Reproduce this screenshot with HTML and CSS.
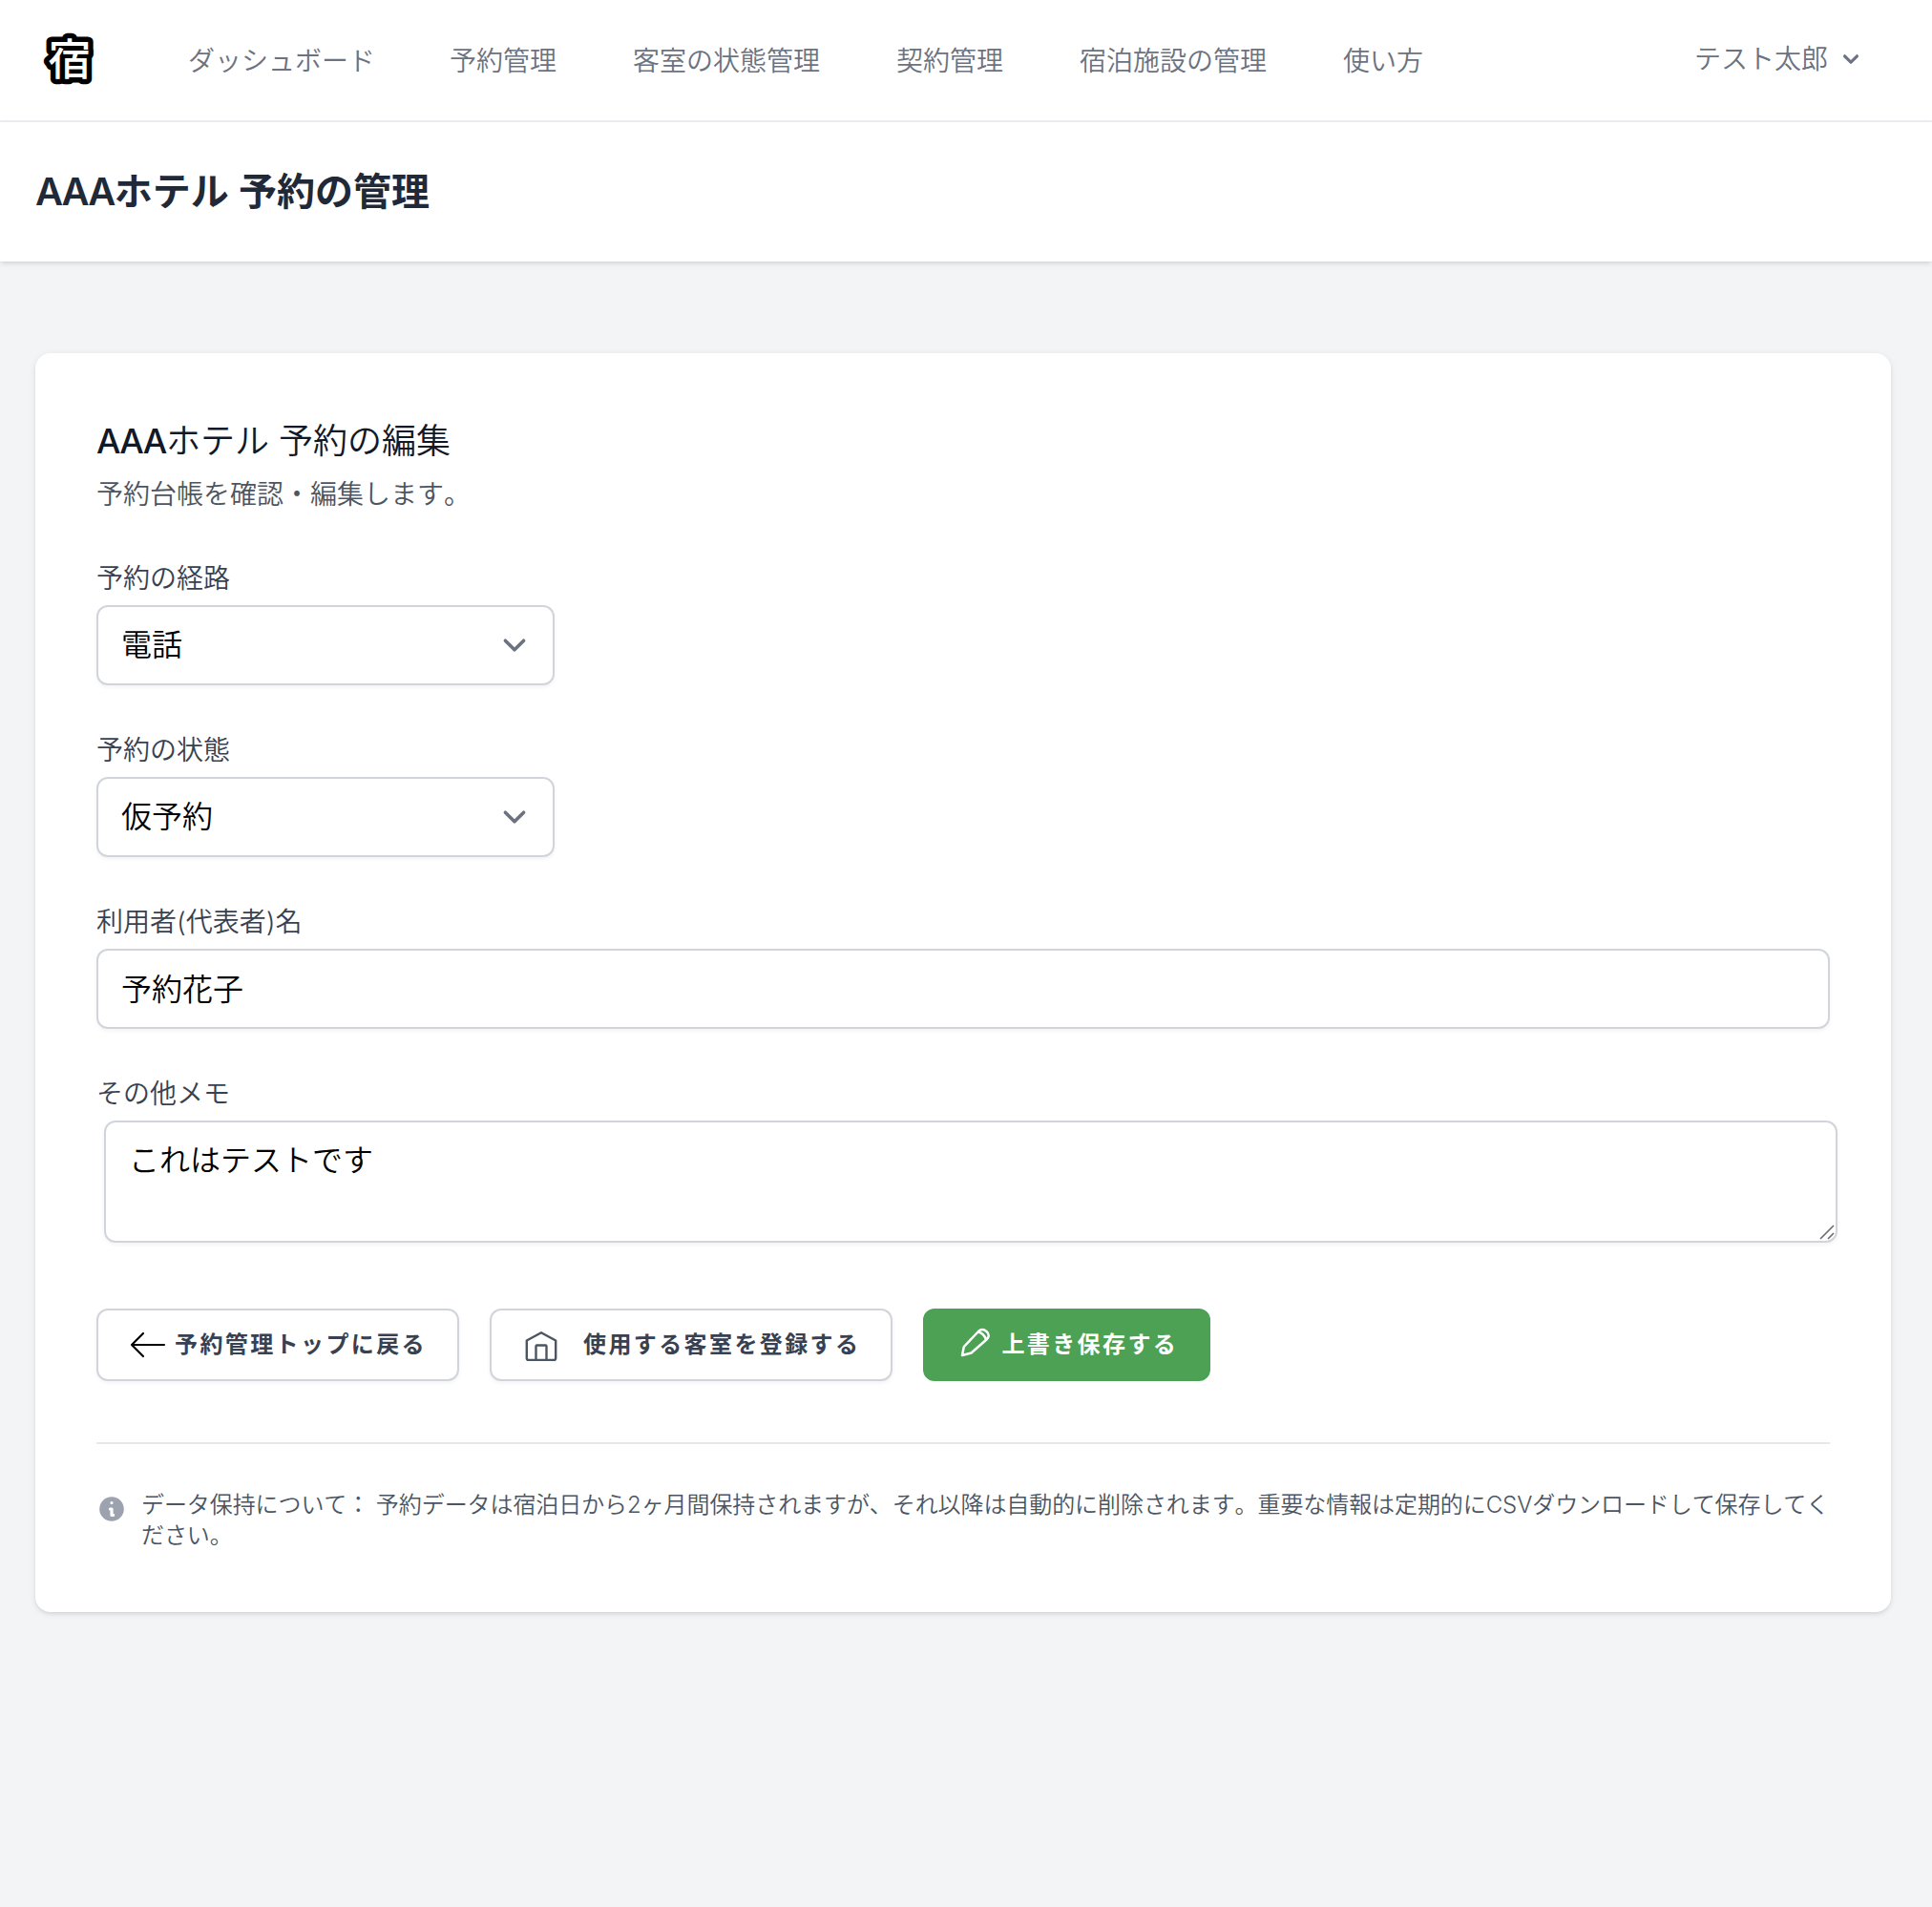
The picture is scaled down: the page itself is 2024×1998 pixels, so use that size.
FILE: index.html
```html
<!DOCTYPE html>
<html lang="ja">
<head>
<meta charset="utf-8">
<title>AAAホテル 予約の管理</title>
<link rel="stylesheet" href="styles.css">
</head>
<body>
<nav class="nav">
  <a class="logo" href="#" aria-label="宿">
    <svg width="80" height="80" viewBox="0 0 80 80"><text class="logo-text" x="40" y="56" text-anchor="middle">宿</text></svg>
  </a>
  <div class="nav-links">
    <a href="#">ダッシュボード</a>
    <a href="#">予約管理</a>
    <a href="#">客室の状態管理</a>
    <a href="#">契約管理</a>
    <a href="#">宿泊施設の管理</a>
    <a href="#">使い方</a>
  </div>
  <button class="user" type="button">
    <span>テスト太郎</span>
    <svg width="32" height="32" viewBox="0 0 20 20" fill="currentColor"><path fill-rule="evenodd" clip-rule="evenodd" d="M5.293 7.293a1 1 0 011.414 0L10 10.586l3.293-3.293a1 1 0 111.414 1.414l-4 4a1 1 0 01-1.414 0l-4-4a1 1 0 010-1.414z"/></svg>
  </button>
</nav>
<header class="page-header">
  <h1><span class="latin">AAA</span>ホテル 予約の管理</h1>
</header>
<main class="content">
  <section class="card">
    <h2><span class="latin">AAA</span>ホテル 予約の編集</h2>
    <p class="lead">予約台帳を確認・編集します。</p>
    <form class="form">
      <div class="field">
        <label for="route">予約の経路</label>
        <select id="route" class="control select"><option>電話</option></select>
      </div>
      <div class="field">
        <label for="status">予約の状態</label>
        <select id="status" class="control select"><option>仮予約</option></select>
      </div>
      <div class="field">
        <label for="guest">利用者(代表者)名</label>
        <input id="guest" class="control" type="text" value="予約花子">
      </div>
      <div class="field">
        <label for="memo">その他メモ</label>
        <div class="memo">
          <textarea id="memo" class="control">これはテストです</textarea>
          <svg class="grip" width="16" height="16" viewBox="0 0 16 16" fill="none" stroke="#6b6b6b" stroke-width="1.6"><path d="M1 15L15 1M9 15l6-6"/></svg>
        </div>
      </div>
      <div class="actions">
        <button class="btn" type="button">
          <svg width="40" height="28" viewBox="0 0 40 28" fill="none" stroke="#000" stroke-width="2.2" stroke-linecap="round" stroke-linejoin="round"><path d="M37 14H3M15 2L3 14l12 12"/></svg>
          <span>予約管理トップに戻る</span>
        </button>
        <button class="btn btn-room" type="button">
          <svg width="36" height="34" viewBox="0 0 36 34" fill="none" stroke="#4b5563" stroke-width="2.4" stroke-linejoin="round"><path d="M2.800 12.500L18 4.200l15.200 8.300V31a2 2 0 0 1-2 2H4.800a2 2 0 0 1-2-2zM12.500 33V18.500a1 1 0 0 1 1-1h9a1 1 0 0 1 1 1V33"/></svg>
          <span>使用する客室を登録する</span>
        </button>
        <button class="btn btn-save" type="button">
          <svg width="34" height="32" viewBox="0 0 34 32" fill="none" stroke="#fff" stroke-width="2.500" stroke-linejoin="round"><path d="M3 29l1.800-9L20 4q4-4 8.500 0t0 8.500L12.500 26.500zM19.500 4.500q6 1 8.500 8"/></svg>
          <span>上書き保存する</span>
        </button>
      </div>
    </form>
    <div class="notice">
      <svg width="32" height="32" viewBox="0 0 20 20" fill="#9ca3af"><path fill-rule="evenodd" clip-rule="evenodd" d="M18 10a8 8 0 11-16 0 8 8 0 0116 0zm-7-4a1 1 0 11-2 0 1 1 0 012 0zM9 9a1 1 0 000 2v3a1 1 0 001 1h1a1 1 0 100-2v-3a1 1 0 00-1-1H9z"/></svg>
      <p>データ保持について： 予約データは宿泊日から2ヶ月間保持されますが、それ以降は自動的に削除されます。重要な情報は定期的にCSVダウンロードして保存してください。</p>
    </div>
  </section>
</main>
</body>
</html>
```
FILE: styles.css
```css
*, *::before, *::after { box-sizing: border-box; }
body {
  margin: 0;
  min-height: 1998px;
  background: #f3f4f6;
  color: #111827;
  font-family: Inter, "Noto Sans CJK JP", sans-serif;
  font-weight: 350;
  font-kerning: none;
}
h1, h2, p { margin: 0; font-weight: inherit; }
svg { display: block; flex: none; }
button, input, select, textarea { font: inherit; color: inherit; }

.nav {
  display: flex;
  align-items: center;
  height: 128px;
  padding: 0 69px 0 33px;
  background: #fff;
  border-bottom: 2px solid #eeeff2;
  color: #6b7280;
  font-size: 28px;
  line-height: 40px;
}
.logo-text {
  font-family: "Noto Sans CJK JP", sans-serif;
  font-size: 45px;
  font-weight: 500;
  fill: #fff;
  stroke: #000;
  stroke-width: 11px;
  stroke-linejoin: round;
  paint-order: stroke;
}
.nav-links { display: flex; gap: 80px; margin-left: 84px; padding-top: 2px; }
.nav-links a:first-child { margin-right: -2px; }
.nav a { color: inherit; text-decoration: none; }
.user {
  display: flex;
  align-items: center;
  gap: 8px;
  margin-left: auto;
  padding: 0 0 2px;
  border: 0;
  background: none;
}

.page-header {
  height: 146px;
  padding: 48px 37px;
  background: #fff;
  box-shadow: 0 2px 6px rgba(0, 0, 0, .1), 0 2px 4px -2px rgba(0, 0, 0, .1);
}
.page-header h1 { font-size: 40px; line-height: 50px; font-weight: 600; color: #1f2937; }
.page-header .latin { letter-spacing: -1.5px; }

.content { padding: 96px 43px 0 37px; }
.card {
  height: 1319px;
  padding: 64px;
  background: #fff;
  border-radius: 16px;
  box-shadow: 0 2px 6px rgba(0, 0, 0, .1), 0 2px 4px -2px rgba(0, 0, 0, .1);
}
.card h2 { font-size: 36px; line-height: 56px; }
.card .latin { font-weight: 500; letter-spacing: -1.2px; }
.lead { margin-top: 8px; font-size: 28px; line-height: 40px; color: #4b5563; }
.form { display: flex; flex-direction: column; gap: 48px; margin-top: 48px; }
.field { display: flex; flex-direction: column; gap: 8px; }
.field label { font-size: 28px; line-height: 40px; color: #374151; }
.control {
  display: block;
  width: 100%;
  height: 84px;
  padding: 16px 24px;
  border: 2px solid #d1d5db;
  border-radius: 12px;
  background: #fff;
  color: #000;
  font-size: 32px;
  line-height: 48px;
  box-shadow: 0 2px 4px rgba(0, 0, 0, .05);
}
input.control { padding: 14px 24px 18px; }
.select {
  appearance: none;
  width: 480px;
  background: #fff url("data:image/svg+xml,%3csvg xmlns='http://www.w3.org/2000/svg' fill='none' viewBox='0 0 20 20'%3e%3cpath stroke='%236b7280' stroke-linecap='round' stroke-linejoin='round' stroke-width='1.5' d='M6 8l4 4 4-4'/%3e%3c/svg%3e") no-repeat right 16px center / 48px 48px;
}
.memo { position: relative; margin: 0 -8px 0 8px; }
.memo textarea { height: 128px; resize: none; }
.grip { position: absolute; right: 3px; bottom: 3px; }

.actions { display: flex; gap: 32px; margin-top: 21px; }
.btn {
  display: flex;
  align-items: center;
  gap: 8px;
  height: 76px;
  padding: 0 32px;
  border: 2px solid #d1d5db;
  border-radius: 12px;
  background: #fff;
  color: #374151;
  font-size: 24px;
  line-height: 32px;
  font-weight: 600;
  letter-spacing: 2.4px;
  white-space: nowrap;
  box-shadow: 0 2px 4px rgba(0, 0, 0, .05);
}
.btn-room { gap: 26px; padding-left: 34px; }
.btn-save { gap: 10px; padding-left: 36px; border-color: #4ca154; background: #4ca154; color: #fff; box-shadow: none; }
.btn-save svg { margin-bottom: 4px; }

.notice {
  display: flex;
  gap: 15px;
  margin-top: 64px;
  padding-top: 48px;
  border-top: 2px solid #e5e7eb;
  color: #4b5563;
  font-size: 24px;
  line-height: 32px;
}
.notice svg { margin-top: 4px; }
.notice p { margin-right: -6px; letter-spacing: -.08px; }
```
